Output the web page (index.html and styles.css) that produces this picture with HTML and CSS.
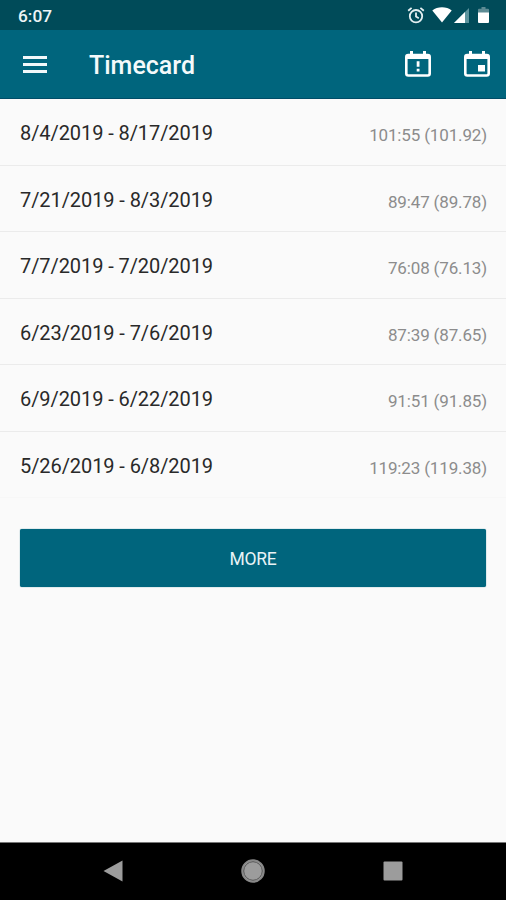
FILE: index.html
```html
<!DOCTYPE html>
<html lang="en">

<head>
    <meta charset="UTF-8">
    <meta name="viewport" content="width=device-width, initial-scale=1.0">
    <title>Timecard</title>
    <link rel="stylesheet" href="styles.css">
</head>

<body>
    <div class="status-bar">
        <span class="clock">6:07</span>
        <div class="status-icons">
            <svg class="alarm" width="18" height="18" viewBox="0 0 18 18" fill="none" stroke="#e4eff1" stroke-width="1.8">
                <circle cx="9" cy="9.2" r="6.2"/>
                <path d="M9 5.600v4l2.800 1.600M1.200 3.800l3.400-2.900M16.800 3.800l-3.400-2.900"/>
            </svg>
            <svg class="wifi" width="20" height="16" viewBox="0 0 20 16" fill="#fff">
                <path d="M10 15.5L.3 3.5C3 1.4 6.300 .3 10 .3s7 1.100 9.700 3.200z"/>
            </svg>
            <svg class="signal" width="15" height="15" viewBox="0 0 15 15">
                <path d="M0 15L15 0v15z" fill="#5d949e"/>
                <path d="M0 15L11 4v11z" fill="#fff"/>
            </svg>
            <svg class="battery" width="11" height="16" viewBox="0 0 11 16">
                <path d="M3.500 0h4v1.700H10a1 1 0 0 1 1 1V6H0V2.700a1 1 0 0 1 1-1h2.500z" fill="#5d8b94"/>
                <path d="M0 5.500h11V15a1 1 0 0 1-1 1H1a1 1 0 0 1-1-1z" fill="#fff"/>
            </svg>
        </div>
    </div>

    <header class="toolbar">
        <svg class="menu" width="24" height="18" viewBox="0 0 24 18" fill="#f1f8fa">
            <path d="M0 0h24v3H0zM0 7h24v3H0zM0 14h24v3H0z"/>
        </svg>
        <h1>Timecard</h1>
        <svg class="calendar" width="26" height="26" viewBox="0 0 26 26">
            <rect x="1.300" y="4" width="23.400" height="20.500" rx="2" fill="none" stroke="#fff" stroke-width="2.600"/>
            <path d="M1 4h24v4H1zM5 0h3v4H5zM18 0h3v4h-3z" fill="#fff"/>
            <path d="M11.700 10.300h2.800v5.500h-2.800zM11.700 17.700h2.800v2.700h-2.800z" fill="#fff"/>
        </svg>
        <svg class="calendar" width="26" height="26" viewBox="0 0 26 26">
            <rect x="1.300" y="4" width="23.400" height="20.500" rx="2" fill="none" stroke="#fff" stroke-width="2.600"/>
            <path d="M1 4h24v4H1zM5 0h3v4H5zM18 0h3v4h-3z" fill="#fff"/>
            <path d="M14 14h7v6.500h-7z" fill="#fff"/>
        </svg>
    </header>

    <main>
        <ul class="periods">
            <li><span class="dates">8/4/2019 - 8/17/2019</span><span class="hours">101:55 (101.92)</span></li>
            <li><span class="dates">7/21/2019 - 8/3/2019</span><span class="hours">89:47 (89.78)</span></li>
            <li><span class="dates">7/7/2019 - 7/20/2019</span><span class="hours">76:08 (76.13)</span></li>
            <li><span class="dates">6/23/2019 - 7/6/2019</span><span class="hours">87:39 (87.65)</span></li>
            <li><span class="dates">6/9/2019 - 6/22/2019</span><span class="hours">91:51 (91.85)</span></li>
            <li><span class="dates">5/26/2019 - 6/8/2019</span><span class="hours">119:23 (119.38)</span></li>
        </ul>
        <button class="more">MORE</button>
    </main>

    <nav class="nav-bar">
        <svg width="20" height="22" viewBox="0 0 20 22"><path d="M.5 11L19.500 .5v21z" fill="#9c9c9c"/></svg>
        <svg width="24" height="24" viewBox="0 0 24 24">
            <circle cx="12" cy="12" r="11" fill="#9c9c9c" stroke="#888" stroke-width="1.500"/>
            <circle cx="12" cy="12" r="9.300" fill="none" stroke="#555" stroke-width="1"/>
        </svg>
        <svg width="20" height="20" viewBox="0 0 20 20"><rect x=".5" y=".5" width="19" height="19" rx="1" fill="#9c9c9c"/></svg>
    </nav>
</body>

</html>
```
FILE: styles.css
```css
* {
    box-sizing: border-box;
}

body {
    display: flex;
    flex-direction: column;
    height: 900px;
    margin: 0;
    background-color: #fafafa;
    font-family: Roboto, "Liberation Sans", sans-serif;
}

.status-bar {
    display: flex;
    justify-content: space-between;
    height: 30px;
    padding: 0 17px 0 18px;
    background-color: #004b59;
    color: #eef5f6;
}

.clock {
    font-size: 17.3px;
    font-weight: 500;
    line-height: 32px;
}

.status-icons {
    display: flex;
    padding-top: 7px;
}

.wifi {
    margin-left: 7px;
}

.signal {
    margin: 1px 9px 0 2px;
}

.toolbar {
    display: flex;
    align-items: center;
    height: 69px;
    padding: 2px 16px 0 23px;
    background-color: #00657d;
    border-bottom: 1px solid #004d68;
    color: #f4fafb;
}

.toolbar h1 {
    flex: 1;
    margin: 2px 0 0 42px;
    font-size: 25px;
    font-weight: 500;
    line-height: 30px;
}

.calendar {
    margin: 0 0 2px 33px;
}

main {
    flex: 1;
}

.periods {
    margin: 0 0 31px;
    padding: 0;
    list-style: none;
}

.periods li {
    display: flex;
    justify-content: space-between;
    height: 66.5px;
    padding: 0 19px 0 20px;
    border-bottom: 1px solid #ebebeb;
}

.periods li:last-child {
    border-bottom-color: #f7f7f7;
}

.dates {
    color: #292929;
    font-size: 20px;
    letter-spacing: -0.08px;
    line-height: 68px;
}

.hours {
    color: #8c8c8c;
    font-size: 17px;
    letter-spacing: -0.15px;
    line-height: 72px;
}

.more {
    display: block;
    width: 466px;
    height: 58px;
    margin: 0 20px;
    padding: 2px 0 0;
    background-color: #00657d;
    border: none;
    border-radius: 2px;
    box-shadow: 0 0 1px #00657d;
    color: #e8f3f6;
    font-family: inherit;
    font-size: 17.5px;
    letter-spacing: -0.3px;
}

.nav-bar {
    display: flex;
    align-items: center;
    justify-content: space-between;
    height: 58px;
    padding: 0 103px 2px;
    background-color: #000;
    border-top: 1px solid #777;
}
```
